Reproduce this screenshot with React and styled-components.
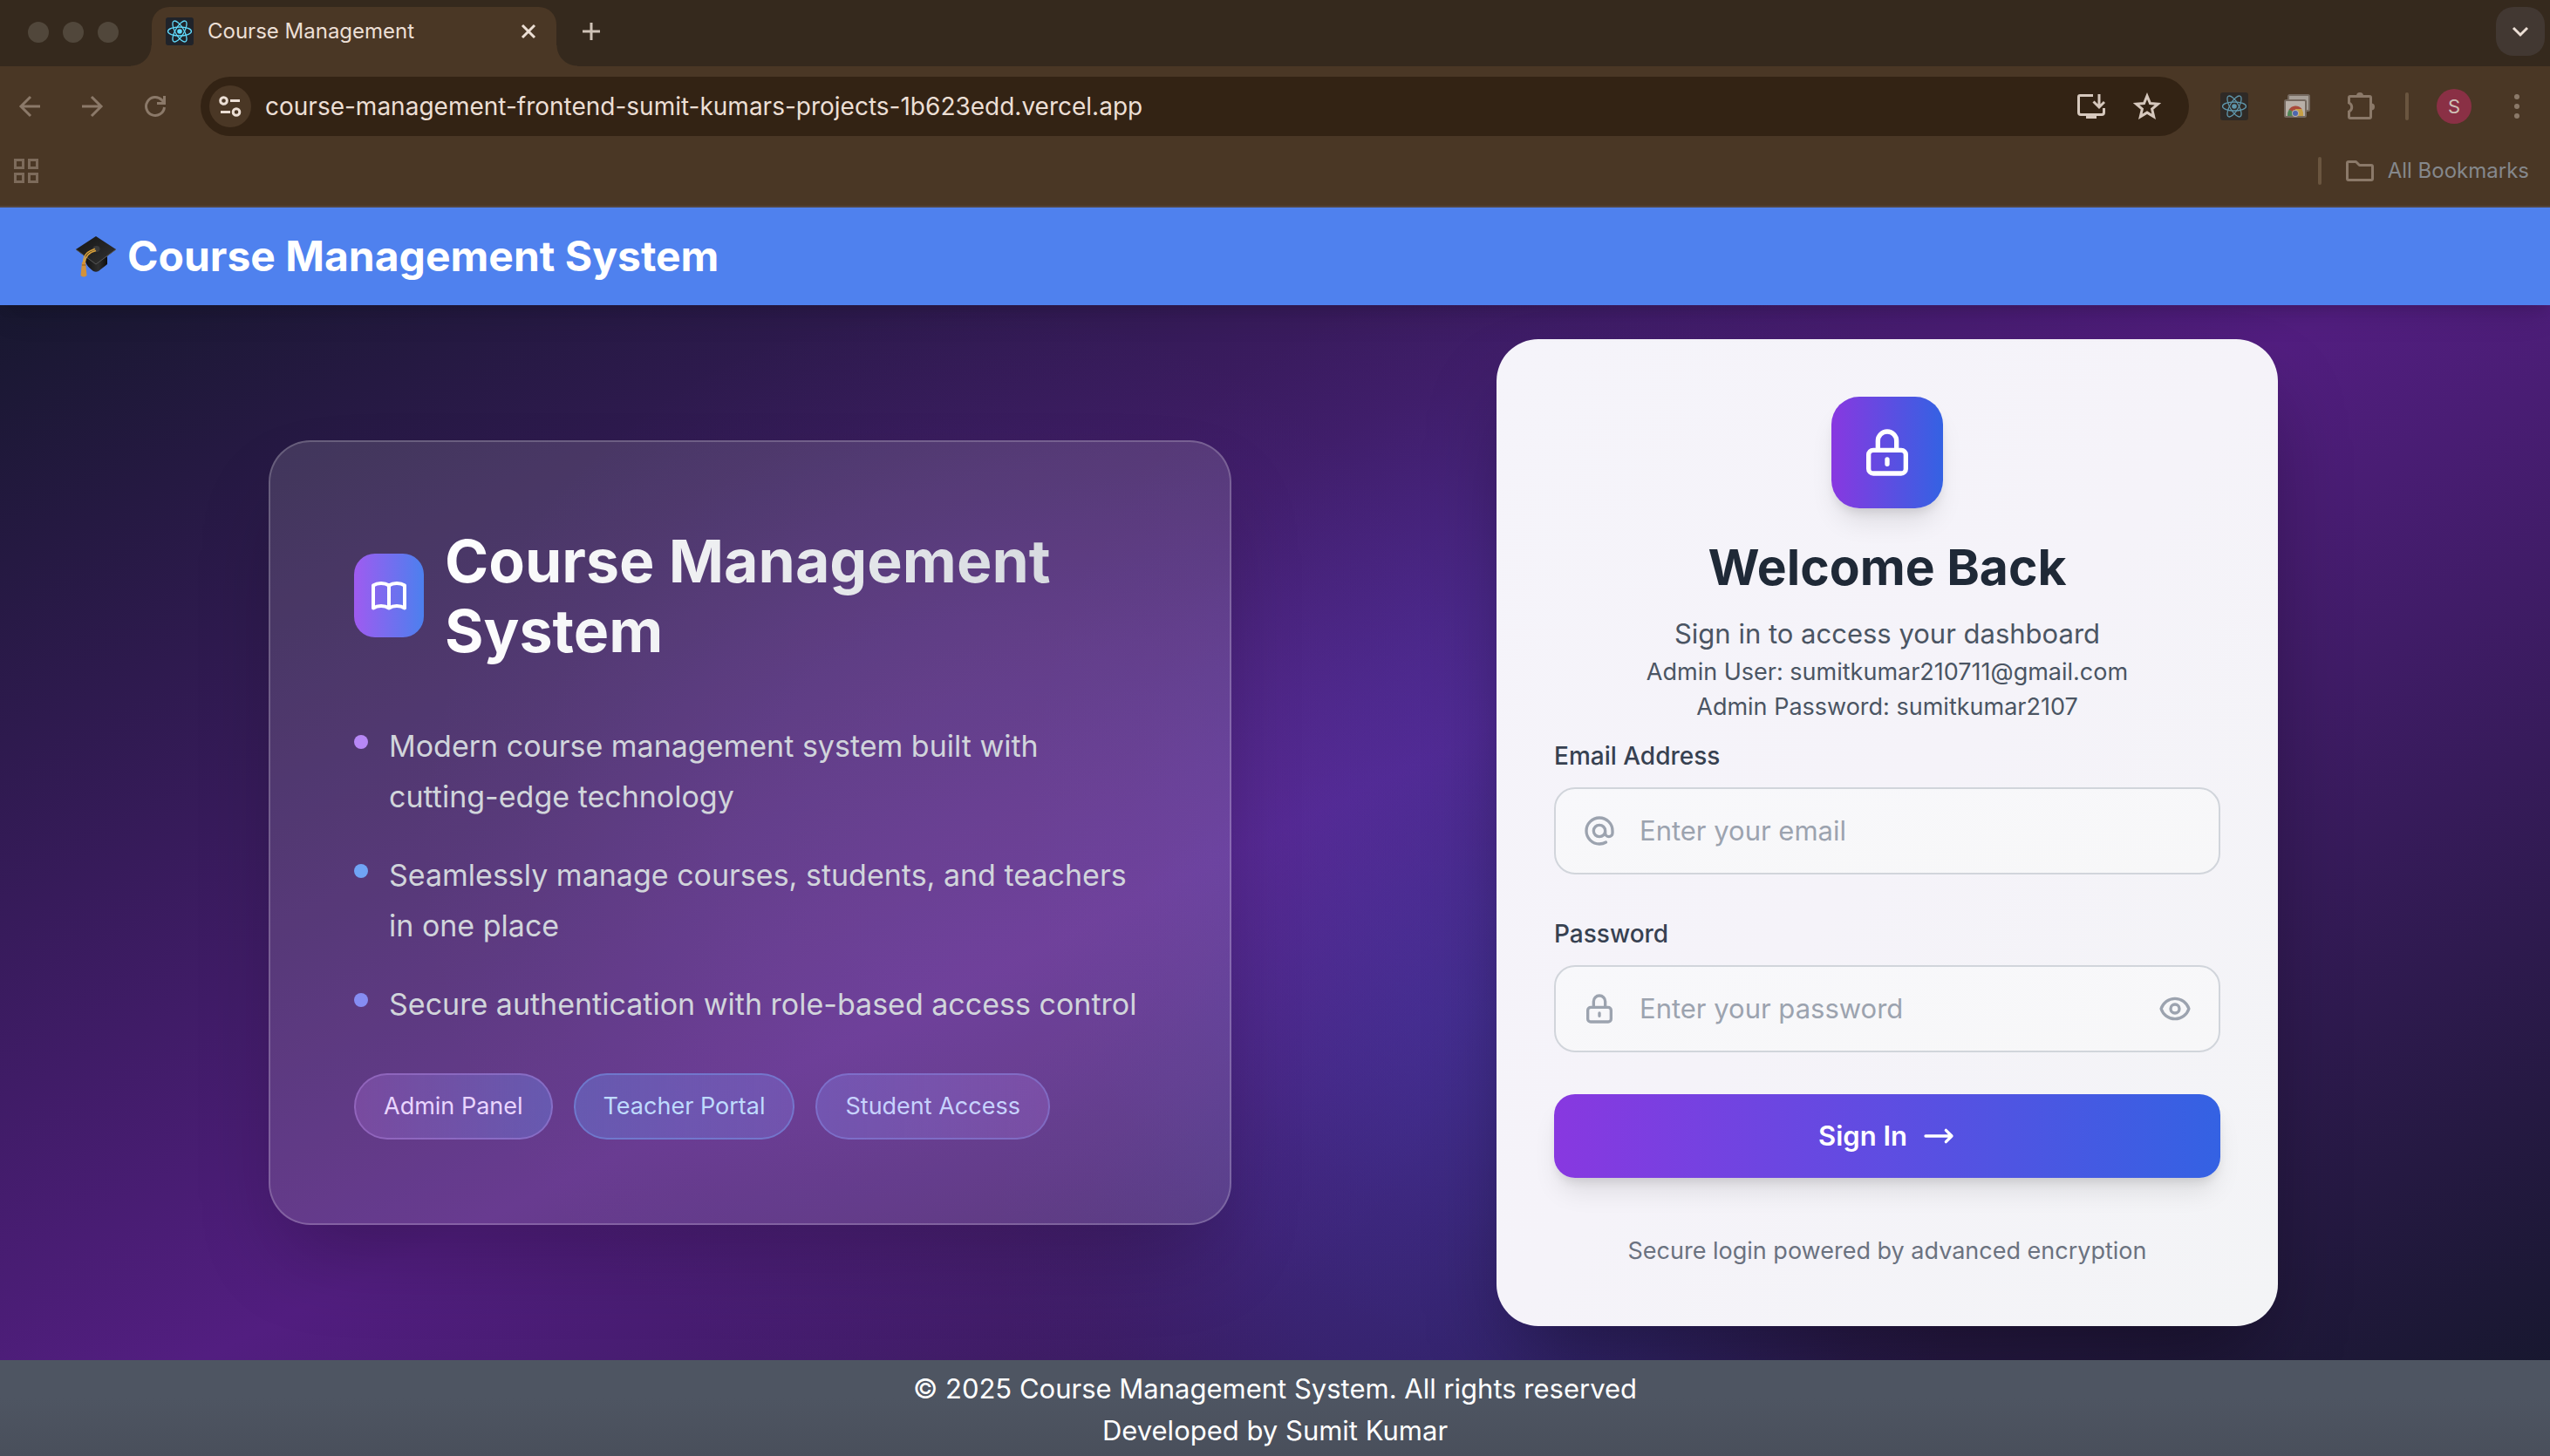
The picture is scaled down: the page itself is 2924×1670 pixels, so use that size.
import React, { useState } from "react";
import styled, { createGlobalStyle } from "styled-components";

const GlobalStyle = createGlobalStyle`
  *, *::before, *::after { box-sizing: border-box; }
  html, body, #root { min-height: 100%; }
  body {
    margin: 0;
    background: #111827;
    font-family: Inter, "Liberation Sans", sans-serif;
    -webkit-font-smoothing: antialiased;
  }
  h1, h2, p, ul { margin: 0; padding: 0; }
  button, input { font-family: inherit; }
  svg { display: block; flex: none; }
`;

/* ---------- browser chrome ---------- */

const Page = styled.div`
  display: flex;
  flex-direction: column;
  min-height: 100vh;
`;

const TabStrip = styled.div`
  display: flex;
  align-items: flex-end;
  height: 76px;
  padding-right: 6px;
  background: #35291d;
`;

const WindowDots = styled.div`
  display: flex;
  align-items: center;
  gap: 16px;
  height: 76px;
  padding: 0 14px 2px 32px;
`;

const WindowDot = styled.span`
  width: 24px;
  height: 24px;
  border-radius: 50%;
  background: #51473b;
`;

const Flare = styled.span`
  width: 24px;
  height: 24px;
  background: radial-gradient(
    circle at ${(p) => (p.$side === "left" ? "0 0" : "100% 0")},
    transparent 23px,
    #4a3725 24px
  );
`;

const Tab = styled.div`
  display: flex;
  align-items: center;
  gap: 16px;
  width: 464px;
  height: 68px;
  padding: 0 20px 12px 16px;
  border-radius: 20px 20px 0 0;
  background: #4a3725;
  color: #ecdfd5;
`;

const TabTitle = styled.span`
  flex: 1;
  font-size: 24px;
  line-height: 32px;
  white-space: nowrap;
`;

const IconButton = styled.button`
  display: flex;
  align-items: center;
  justify-content: center;
  width: ${(p) => p.$size || 48}px;
  height: ${(p) => p.$size || 48}px;
  padding: 0;
  border: 0;
  border-radius: 50%;
  background: ${(p) => p.$fill || "transparent"};
  color: ${(p) => p.$color || "#8b7969"};
  flex: none;
  cursor: pointer;
`;

const StripEnd = styled.div`
  display: flex;
  flex: 1;
  align-items: center;
  align-self: flex-start;
  justify-content: space-between;
  height: 72px;
`;

const TabSearch = styled.button`
  display: flex;
  align-items: center;
  justify-content: center;
  width: 56px;
  height: 56px;
  padding: 0;
  border: 0;
  border-radius: 20px;
  background: #423832;
  color: #ecdfd5;
`;

const Toolbar = styled.div`
  display: flex;
  align-items: center;
  gap: 28px;
  height: 92px;
  padding: 0 14px 0 10px;
  background: #4a3725;
`;

const ToolGroup = styled.div`
  display: flex;
  align-items: center;
  gap: 24px;
`;

const Omnibox = styled.div`
  display: flex;
  flex: 1;
  align-items: center;
  gap: 16px;
  height: 68px;
  padding: 0 24px 0 10px;
  border-radius: 34px;
  background: #332314;
`;

const UrlInput = styled.input`
  flex: 1;
  min-width: 0;
  padding: 0;
  border: 0;
  outline: 0;
  background: transparent;
  color: #ecdfd5;
  font-size: 28px;
  line-height: 40px;
`;

const Divider = styled.span`
  width: 4px;
  height: 32px;
  margin: 0 4px;
  border-radius: 2px;
  background: #6a553f;
`;

const Avatar = styled.span`
  display: flex;
  align-items: center;
  justify-content: center;
  width: 40px;
  height: 40px;
  border-radius: 50%;
  background: #8a3045;
  color: #cfc0b6;
  font-size: 22px;
`;

const BookmarkBar = styled.div`
  display: flex;
  align-items: center;
  justify-content: space-between;
  height: 70px;
  padding: 0 24px 12px 16px;
  border-bottom: 2px solid #534640;
  background: #4a3725;
  color: #7d6b5b;
`;

const BookmarkFolder = styled.button`
  display: flex;
  align-items: center;
  gap: 16px;
  padding: 0;
  border: 0;
  background: transparent;
  color: #85888c;
  font-size: 24px;
  line-height: 32px;
`;

/* ---------- site ---------- */

const SiteHeader = styled.header`
  position: relative;
  z-index: 1;
  display: flex;
  align-items: center;
  gap: 12px;
  height: 112px;
  padding: 0 86px;
  background: #4f81ee;
  color: #fff;
  box-shadow: 0 20px 30px -6px rgba(0, 0, 0, 0.1), 0 8px 12px -4px rgba(0, 0, 0, 0.1);
`;

const SiteTitle = styled.h1`
  font-size: 48px;
  line-height: 64px;
  font-weight: 700;
`;

/* a soft disc of light: solid in the middle, faded out at the rim */
const glow = (radius, place, rgb, a) => `radial-gradient(circle ${radius}px at ${place},
  rgba(${rgb}, ${a}), rgba(${rgb}, ${a * 0.94}) 25%, rgba(${rgb}, ${a * 0.78}) 42%,
  rgba(${rgb}, ${a * 0.48}) 60%, rgba(${rgb}, ${a * 0.14}) 80%, rgba(${rgb}, 0))`;

const Hero = styled.main`
  display: flex;
  flex: 1;
  align-items: center;
  justify-content: center;
  padding: 39px 52px 39px 48px;
  background:
    ${glow(640, "38% 52%", "150, 85, 230", 0.13)},
    ${glow(640, "62% 48%", "70, 90, 225", 0.22)},
    ${glow(560, "58% 87%", "60, 80, 225", 0.2)},
    linear-gradient(to bottom right, #131729, #521e80 50%, #131729) center / 100% calc(100% + 222px);
`;

const HeroColumns = styled.div`
  display: grid;
  grid-template-columns: minmax(0, 1104px) minmax(0, 896px);
  align-items: center;
  justify-content: space-between;
  width: 100%;
  max-width: 2304px;
`;

const GlassCard = styled.section`
  padding: 96px;
  border: 2px solid rgba(255, 255, 255, 0.2);
  border-radius: 48px;
  background: rgba(255, 255, 255, 0.13);
  box-shadow: 0 50px 100px -24px rgba(0, 0, 0, 0.25);
`;

const Brand = styled.div`
  display: flex;
  align-items: center;
  gap: 24px;
  margin-bottom: 64px;
`;

const BrandMark = styled.div`
  display: flex;
  align-items: center;
  justify-content: center;
  width: 80px;
  height: 96px;
  border-radius: 24px;
  background: linear-gradient(to right, #9f5bf0, #4c80ee);
  color: #fff;
  flex: none;
`;

const BrandTitle = styled.h2`
  flex: 1;
  font-size: 68px;
  line-height: 80px;
  font-weight: 700;
  color: transparent;
  background: linear-gradient(to right, #fff, #d1d5db);
  background-clip: text;
  -webkit-background-clip: text;
`;

const FeatureList = styled.ul`
  display: flex;
  flex-direction: column;
  gap: 32px;
  list-style: none;
`;

const Feature = styled.li`
  display: flex;
  gap: 24px;
  color: #d1d5db;
  font-size: 34px;
  line-height: 58px;

  &::before {
    content: "";
    flex: none;
    width: 16px;
    height: 16px;
    margin-top: 16px;
    border-radius: 50%;
    background: ${(p) => p.$dot};
  }
`;

const Pills = styled.div`
  display: flex;
  flex-wrap: wrap;
  gap: 24px;
  margin-top: 50px;
`;

const Pill = styled.span`
  padding: 16px 32px;
  border: 2px solid ${(p) => p.$edge};
  border-radius: 38px;
  background: linear-gradient(to right, ${(p) => p.$from}, ${(p) => p.$to}) border-box;
  color: ${(p) => p.$ink};
  font-size: 27px;
  line-height: 40px;
  white-space: nowrap;
`;

const LoginCard = styled.section`
  display: flex;
  flex-direction: column;
  align-items: center;
  padding: 66px;
  border-radius: 48px;
  background: linear-gradient(to bottom right, #f5f4fa, #f5f3f9 50%, #f3f4f6);
  box-shadow: 0 50px 100px -24px rgba(0, 0, 0, 0.4);
  color: #4b5563;
`;

const softShadow = "0 20px 30px -6px rgba(0, 0, 0, 0.1), 0 8px 12px -4px rgba(0, 0, 0, 0.1)";
const accent = "linear-gradient(to right, #8838e0, #3462e3)";

const LoginMark = styled.div`
  display: flex;
  align-items: center;
  justify-content: center;
  width: 128px;
  height: 128px;
  margin-bottom: 32px;
  border-radius: 32px;
  background: ${accent};
  box-shadow: ${softShadow};
  color: #fff;
`;

const LoginTitle = styled.h2`
  margin-bottom: 16px;
  color: #1f2937;
  font-size: 57px;
  line-height: 72px;
  font-weight: 700;
`;

const Lead = styled.p`
  font-size: 31px;
  line-height: 48px;
`;

const Small = styled.p`
  color: ${(p) => p.$ink || "#4b5563"};
  font-size: 27px;
  line-height: 40px;
`;

const LoginForm = styled.form`
  display: flex;
  flex-direction: column;
  gap: 48px;
  width: 100%;
  margin: 16px 0 64px;
`;

const Field = styled.div`
  display: flex;
  flex-direction: column;
  gap: 16px;
`;

const FieldLabel = styled.label`
  color: #374151;
  font-size: 28px;
  line-height: 40px;
  font-weight: 500;
`;

const FieldBox = styled.div`
  display: flex;
  align-items: center;
  gap: 26px;
  height: 100px;
  padding: 0 30px;
  border: 2px solid #d1d5db;
  border-radius: 24px;
  background: linear-gradient(to bottom right, #f8f8fb, #f7f7f8);
  color: #9ca3af;
`;

const FieldInput = styled.input`
  flex: 1;
  min-width: 0;
  padding: 0;
  border: 0;
  outline: 0;
  background: transparent;
  color: #1f2937;
  font-size: 31px;
  line-height: 48px;

  &::placeholder { color: #9ca3af; opacity: 1; }
`;

const SubmitButton = styled.button`
  display: flex;
  align-items: center;
  justify-content: center;
  gap: 16px;
  height: 96px;
  border: 0;
  border-radius: 24px;
  background: ${accent};
  box-shadow: ${softShadow};
  color: #fff;
  font-size: 31px;
  line-height: 48px;
  font-weight: 600;
  cursor: pointer;
`;

const SiteFooter = styled.footer`
  padding: 9px 0 5px;
  background: linear-gradient(#4e5562 40%, #494f5b);
  color: #fff;
  font-size: 31px;
  line-height: 48px;
  text-align: center;
`;

/* ---------- icons ---------- */

const Outline = ({ size, d, width = 2 }) => (
  <svg width={size} height={size} viewBox="0 0 24 24" fill="none" stroke="currentColor"
    strokeWidth={width} strokeLinecap="round" strokeLinejoin="round" aria-hidden="true">
    {d.map((path) => <path key={path} d={path} />)}
  </svg>
);

const LOCK = ["M12 15v2m-6 4h12a2 2 0 002-2v-6a2 2 0 00-2-2H6a2 2 0 00-2 2v6a2 2 0 002 2zm10-10V7a4 4 0 00-8 0v4h8z"];
const AT = ["M16 12a4 4 0 10-8 0 4 4 0 008 0zm0 0v1.5a2.5 2.5 0 005 0V12a9 9 0 10-9 9m4.5-1.206a8.959 8.959 0 01-4.5 1.207"];
const EYE = [
  "M15 12a3 3 0 11-6 0 3 3 0 016 0z",
  "M2.458 12C3.732 7.943 7.523 5 12 5c4.478 0 8.268 2.943 9.542 7-1.274 4.057-5.064 7-9.542 7-4.477 0-8.268-2.943-9.542-7z",
];
const ARROW = ["M17 8l4 4m0 0l-4 4m4-4H3"];
const BOOK = ["M12 6.253v13m0-13C10.832 5.477 9.246 5 7.5 5S4.168 5.477 3 6.253v13C4.168 18.477 5.754 18 7.5 18s3.332.477 4.5 1.253m0-13C13.168 5.477 14.754 5 16.5 5c1.747 0 3.332.477 4.5 1.253v13C19.832 18.477 18.247 18 16.5 18c-1.746 0-3.332.477-4.5 1.253"];

const Glyph = ({ w = 32, h = w, sw = 3, children }) => (
  <svg width={w} height={h} viewBox={`0 0 ${w} ${h}`} fill="none" stroke="currentColor"
    strokeWidth={sw} aria-hidden="true">
    {children}
  </svg>
);

const ReactMark = ({ ground, ink }) => (
  <svg width="32" height="32" viewBox="0 0 32 32" aria-hidden="true">
    <rect width="32" height="32" rx="3" fill={ground} />
    <g fill="none" stroke={ink} strokeWidth="1.3">
      <ellipse cx="16" cy="16" rx="13.5" ry="5" />
      <ellipse cx="16" cy="16" rx="13.5" ry="5" transform="rotate(60 16 16)" />
      <ellipse cx="16" cy="16" rx="13.5" ry="5" transform="rotate(120 16 16)" />
    </g>
    <circle cx="16" cy="16" r="2.8" fill={ink} />
  </svg>
);

const GraduationCap = () => (
  <svg width="48" height="48" viewBox="0 0 48 48" aria-hidden="true">
    <defs>
      <linearGradient id="capTop" x1="0" y1="0" x2="1" y2="1">
        <stop offset="0" stopColor="#151515" />
        <stop offset="1" stopColor="#333" />
      </linearGradient>
      <linearGradient id="capBase" x1="0" y1="0" x2="1" y2="0">
        <stop offset="0" stopColor="#111" />
        <stop offset="0.6" stopColor="#2e2e2e" />
        <stop offset="1" stopColor="#0c0c0c" />
      </linearGradient>
    </defs>
    <path d="M12 24L24 31L37 24V33C34 36 30 38 27 41C25 42 23 42 21 41C17 38 13 34 12 30Z" fill="url(#capBase)" />
    <path d="M1 16L24 1L47 16L24 34Z" fill="url(#capTop)" />
    <path d="M1 16L24 33L47 16" fill="none" stroke="#555" strokeWidth="1" />
    <ellipse cx="24.5" cy="15.5" rx="4" ry="3.4" fill="#3a3a3a" />
    <path d="M23 15.5C16 18 10 20 9.500 32M24 17.500C17 19 12 23 11 32" fill="none" stroke="#d9a13b" strokeWidth="1.600" />
    <path d="M8 31Q10 29 12 31L13.500 46Q10 49 6.500 46Z" fill="#d3923a" />
    <path d="M8 34H12.500" stroke="#9c6420" strokeWidth="1.200" />
  </svg>
);

const Screenshots = () => (
  <svg width="32" height="28" viewBox="0 0 32 28" aria-hidden="true">
    <rect x="6" y="1" width="24" height="18" rx="1.500" fill="#a79f97" stroke="#75695f" strokeWidth="2" />
    <rect x="2" y="7" width="24" height="19" rx="1.500" fill="#b9b0a8" stroke="#75695f" strokeWidth="2" />
    <path d="M14 22L6.500 18A9 9 0 0 1 21.500 17Z" fill="#a94a3a" />
    <path d="M14 22L7 17.500Q4.500 21 5 25H13Z" fill="#4d8453" />
    <path d="M14 17H21.500Q23.500 20.500 23 25H14Z" fill="#c79f45" />
    <circle cx="14" cy="22" r="4" fill="#b9b0a8" />
    <circle cx="14" cy="22" r="3" fill="#4d66ae" />
  </svg>
);

/* ---------- page ---------- */

function BrowserChrome() {
  const [url, setUrl] = useState("course-management-frontend-sumit-kumars-projects-1b623edd.vercel.app");
  return (
    <div>
      <TabStrip>
        <WindowDots><WindowDot /><WindowDot /><WindowDot /></WindowDots>
        <Flare $side="left" />
        <Tab>
          <ReactMark ground="#20232a" ink="#61dafb" />
          <TabTitle>Course Management</TabTitle>
          <IconButton $size={24} $color="#ecdfd5" aria-label="Close tab">
            <Glyph w={24}><path d="M5 5L19 19M19 5L5 19" /></Glyph>
          </IconButton>
        </Tab>
        <Flare $side="right" />
        <StripEnd>
          <IconButton $size={32} $color="#cfc2b6" aria-label="New tab">
            <Glyph w={24}><path d="M12 2V22M2 12H22" /></Glyph>
          </IconButton>
          <TabSearch aria-label="Search tabs">
            <Glyph w={24} sw={3}><path d="M4 8L12 16L20 8" /></Glyph>
          </TabSearch>
        </StripEnd>
      </TabStrip>

      <Toolbar>
        <ToolGroup>
          <IconButton aria-label="Back">
            <Glyph w={26} sw={3}><path d="M25 13H3M14 2L3 13L14 24" /></Glyph>
          </IconButton>
          <IconButton aria-label="Forward">
            <Glyph w={26} sw={3}><path d="M1 13H23M12 2L23 13L12 24" /></Glyph>
          </IconButton>
          <IconButton aria-label="Reload">
            <Glyph w={26} sw={3}>
              <path d="M23.500 14A10.500 10.500 0 1 1 20.500 5.600L23 8.500" />
              <path d="M23.500 1V9.500H15" />
            </Glyph>
          </IconButton>
        </ToolGroup>
        <Omnibox>
          <IconButton $fill="#4a3725" $color="#ecdfd5" aria-label="Site information">
            <Glyph w={26}>
              <circle cx="5.500" cy="6.500" r="3.800" />
              <path d="M13 6.500H24M2 19.500H13" />
              <circle cx="20" cy="19.500" r="3.800" />
            </Glyph>
          </IconButton>
          <UrlInput aria-label="Address" value={url} onChange={(e) => setUrl(e.target.value)} />
          <IconButton $color="#d6c8bd" aria-label="Install app">
            <Glyph w={32} sw={3}>
              <path d="M18 3.500H3Q1.500 3.500 1.500 5V23Q1.500 25.500 4 25.500H28Q30.500 25.500 30.500 23V18" />
              <path d="M25 2V16M18.500 10.500L25 17L31 11" />
              <path d="M10 26H22V30H10Z" fill="currentColor" stroke="none" />
            </Glyph>
          </IconButton>
          <IconButton $color="#d6c8bd" aria-label="Bookmark this tab">
            <Glyph w={32} sw={3}>
              <path d="M16 4L19.500 12.500L28.500 13.200L21.600 19L23.700 27.800L16 23.100L8.300 27.800L10.400 19L3.500 13.200L12.500 12.500Z" />
            </Glyph>
          </IconButton>
        </Omnibox>
        <ToolGroup>
          <IconButton aria-label="React Developer Tools"><ReactMark ground="#2f2a26" ink="#5f96ab" /></IconButton>
          <IconButton aria-label="Screenshots"><Screenshots /></IconButton>
          <IconButton aria-label="Extensions">
            <Glyph w={36} sw={3}>
              <path d="M5.500 8Q5.500 6.500 7 6.500H29Q30.500 6.500 30.500 8V30Q30.500 31.500 29 31.500H7Q5.500 31.500 5.500 30V24A5.500 5.500 0 0 0 5.500 14Z" />
              <path d="M14 6A4 4 0 0 1 22 6ZM31 14.500A4 4 0 0 1 31 22.500Z" fill="currentColor" stroke="none" />
            </Glyph>
          </IconButton>
          <Divider />
          <IconButton aria-label="Profile"><Avatar>S</Avatar></IconButton>
          <IconButton aria-label="Browser menu">
            <Glyph w={32} sw={0}>
              <g fill="currentColor">
                <circle cx="16" cy="5" r="3" /><circle cx="16" cy="16" r="3" /><circle cx="16" cy="27" r="3" />
              </g>
            </Glyph>
          </IconButton>
        </ToolGroup>
      </Toolbar>

      <BookmarkBar>
        <IconButton $size={28} $color="#7d6b5b" aria-label="Tab groups">
          <Glyph w={28}>
            <path d="M1.500 1.500H10.500V10.500H1.500ZM17.500 1.500H26.500V10.500H17.500ZM1.500 17.500H10.500V26.500H1.500ZM17.500 17.500H26.500V26.500H17.500Z" />
          </Glyph>
        </IconButton>
        <ToolGroup>
          <Divider />
          <BookmarkFolder>
            <Glyph w={32} h={24}>
              <path stroke="#8b7969" strokeLinejoin="round" d="M1.500 3Q1.500 1.500 3 1.500H11.500L15.500 5.500H29Q30.500 5.500 30.500 7V21Q30.500 22.500 29 22.500H3Q1.500 22.500 1.500 21Z" />
            </Glyph>
            All Bookmarks
          </BookmarkFolder>
        </ToolGroup>
      </BookmarkBar>
    </div>
  );
}

const FEATURES = [
  { dot: "#b788f6", text: "Modern course management system built with cutting-edge technology" },
  { dot: "#70a4f5", text: "Seamlessly manage courses, students, and teachers in one place" },
  { dot: "#868df3", text: "Secure authentication with role-based access control" },
];

const ROLES = [
  { text: "Admin Panel", from: "rgba(150,95,190,.45)", to: "rgba(104,110,200,.6)", edge: "rgba(192,150,240,.35)", ink: "#e9d5ff" },
  { text: "Teacher Portal", from: "rgba(104,110,200,.6)", to: "rgba(122,105,200,.5)", edge: "rgba(120,160,240,.45)", ink: "#bfdbfe" },
  { text: "Student Access", from: "rgba(122,105,200,.55)", to: "rgba(145,98,190,.45)", edge: "rgba(140,150,240,.4)", ink: "#c7d2fe" },
];

function Login() {
  const [email, setEmail] = useState("");
  const [password, setPassword] = useState("");
  const [visible, setVisible] = useState(false);
  return (
    <LoginCard>
      <LoginMark><Outline size={64} d={LOCK} /></LoginMark>
      <LoginTitle>Welcome Back</LoginTitle>
      <Lead>Sign in to access your dashboard</Lead>
      <Small>Admin User: sumitkumar210711@gmail.com</Small>
      <Small>Admin Password: sumitkumar2107</Small>
      <LoginForm onSubmit={(e) => e.preventDefault()}>
        <Field>
          <FieldLabel htmlFor="email">Email Address</FieldLabel>
          <FieldBox>
            <Outline size={40} d={AT} />
            <FieldInput id="email" type="email" placeholder="Enter your email"
              value={email} onChange={(e) => setEmail(e.target.value)} />
          </FieldBox>
        </Field>
        <Field>
          <FieldLabel htmlFor="password">Password</FieldLabel>
          <FieldBox>
            <Outline size={40} d={LOCK} />
            <FieldInput id="password" type={visible ? "text" : "password"} placeholder="Enter your password"
              value={password} onChange={(e) => setPassword(e.target.value)} />
            <IconButton type="button" $size={40} $color="#9ca3af" aria-label="Show password"
              onClick={() => setVisible(!visible)}>
              <Outline size={40} d={EYE} />
            </IconButton>
          </FieldBox>
        </Field>
        <SubmitButton type="submit">
          Sign In
          <Outline size={40} d={ARROW} />
        </SubmitButton>
      </LoginForm>
      <Small $ink="#6b7280">Secure login powered by advanced encryption</Small>
    </LoginCard>
  );
}

export default function App() {
  return (
    <Page>
      <GlobalStyle />
      <BrowserChrome />
      <SiteHeader>
        <GraduationCap />
        <SiteTitle>Course Management System</SiteTitle>
      </SiteHeader>
      <Hero>
        <HeroColumns>
          <GlassCard>
            <Brand>
              <BrandMark><Outline size={48} d={BOOK} /></BrandMark>
              <BrandTitle>Course Management System</BrandTitle>
            </Brand>
            <FeatureList>
              {FEATURES.map((f) => <Feature key={f.text} $dot={f.dot}>{f.text}</Feature>)}
            </FeatureList>
            <Pills>
              {ROLES.map((r) => (
                <Pill key={r.text} $from={r.from} $to={r.to} $edge={r.edge} $ink={r.ink}>{r.text}</Pill>
              ))}
            </Pills>
          </GlassCard>
          <Login />
        </HeroColumns>
      </Hero>
      <SiteFooter>
        <p>© 2025 Course Management System. All rights reserved</p>
        <p>Developed by Sumit Kumar</p>
      </SiteFooter>
    </Page>
  );
}
